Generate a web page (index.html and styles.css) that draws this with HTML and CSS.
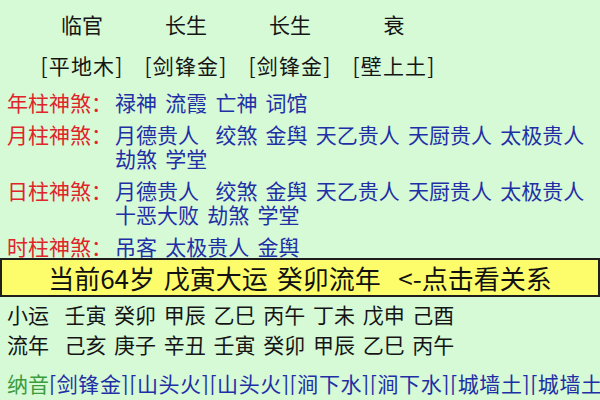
FILE: index.html
```html
<!DOCTYPE html>
<html lang="zh-CN">
<head>
<meta charset="utf-8">
<link rel="stylesheet" href="styles.css">
</head>
<body>
<div class="page">
  <div class="pillars">
    <div class="prow dishi"><span>临官</span><span>长生</span><span>长生</span><span>衰</span></div>
    <div class="prow nay"><span>[平地木]</span><span>[剑锋金]</span><span>[剑锋金]</span><span>[壁上土]</span></div>
  </div>
  <div class="shensha">
    <div class="ss"><div class="label">年柱神煞：</div><div class="val">禄神 流霞 亡神 词馆</div></div>
    <div class="ss"><div class="label">月柱神煞：</div><div class="val">月德贵人&nbsp; 绞煞 金舆 天乙贵人 天厨贵人 太极贵人 劫煞 学堂</div></div>
    <div class="ss"><div class="label">日柱神煞：</div><div class="val">月德贵人&nbsp; 绞煞 金舆 天乙贵人 天厨贵人 太极贵人 十恶大败 劫煞 学堂</div></div>
    <div class="ss"><div class="label">时柱神煞：</div><div class="val">吊客 太极贵人 金舆</div></div>
  </div>
  <div class="bar">当前64岁 戊寅大运 癸卯流年&nbsp; &lt;-点击看关系</div>
  <div class="yun first">小运&nbsp; 壬寅 癸卯 甲辰 乙巳 丙午 丁未 戊申 己酉</div>
  <div class="yun">流年&nbsp; 己亥 庚子 辛丑 壬寅 癸卯 甲辰 乙巳 丙午</div>
  <div class="line nayin"><span class="tag">纳音</span><span class="items">[剑锋金][山头火][山头火][涧下水][涧下水][城墙土][城墙土][城墙土]</span></div>
  <div class="line last"><span class="tag">调候</span><span class="items">&nbsp; 甲癸丙&nbsp;&nbsp; 丙癸甲&nbsp;&nbsp; 丙甲癸&nbsp;&nbsp; 丙甲癸&nbsp;&nbsp; 丙甲</span></div>
</div>
</body>
</html>
```

FILE: styles.css
```css
html, body {
  margin: 0;
  padding: 0;
  background: #d6f9d6;
}
body {
  width: 600px;
  height: 400px;
  overflow: hidden;
  font-family: "Noto Sans CJK SC", "Noto Sans", sans-serif;
  color: #151515;
}
.page {
  width: 600px;
}
.prow {
  display: grid;
  grid-template-columns: repeat(4, 104px);
  padding-left: 30px;
  font-size: 21px;
  text-align: center;
  white-space: nowrap;
}
.dishi {
  height: 44px;
  line-height: 48px;
}
.nay {
  height: 44px;
  line-height: 42px;
  letter-spacing: 1.2px;
}
.shensha {
  margin-top: 2px;
  padding-left: 7px;
  font-size: 21px;
}
.ss {
  display: grid;
  grid-template-columns: 108px 1fr;
  line-height: 24px;
  margin-bottom: 8px;
}
.ss:last-child {
  margin-bottom: 0;
}
.label {
  color: #e0242a;
  white-space: nowrap;
}
.val {
  color: #1f2fa6;
  word-spacing: 3.5px;
}
.bar {
  margin-top: 0;
  border: 2px solid #1e1e1e;
  background: #fdfd6c;
  font-size: 26px;
  line-height: 35px;
  text-align: center;
  color: #111;
  word-spacing: 3px;
  white-space: nowrap;
}
.yun {
  padding-left: 7px;
  font-size: 21px;
  line-height: 30px;
  word-spacing: 3px;
  white-space: nowrap;
}
.yun.first {
  margin-top: 2px;
}
.line {
  padding-left: 7px;
  font-size: 21px;
  line-height: 24px;
  white-space: nowrap;
  overflow: hidden;
}
.nayin {
  margin-top: 12px;
}
.last {
  padding-top: 2px;
}
.tag {
  color: #3c9c3c;
}
.items {
  color: #1f2fa6;
}
.nayin .items {
  letter-spacing: 0.6px;
}
```
